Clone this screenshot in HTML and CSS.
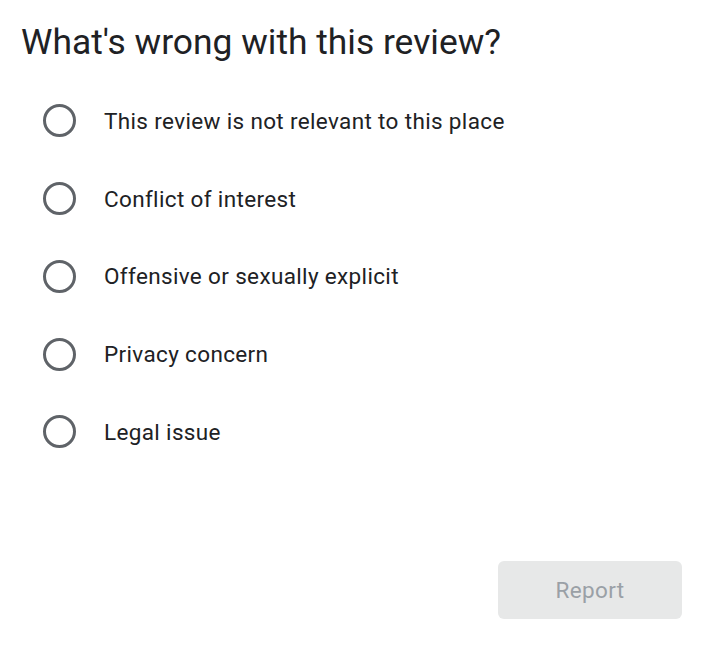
FILE: index.html
```html
<!DOCTYPE html>
<html>
<head>
<meta charset="utf-8">
<link rel="stylesheet" href="styles.css">
</head>
<body>
<div class="dialog">
  <h1 class="title">What's wrong with this review?</h1>
  <div class="options">
    <label class="option"><span class="radio"></span><span class="label">This review is not relevant to this place</span></label>
    <label class="option"><span class="radio"></span><span class="label">Conflict of interest</span></label>
    <label class="option"><span class="radio"></span><span class="label">Offensive or sexually explicit</span></label>
    <label class="option"><span class="radio"></span><span class="label">Privacy concern</span></label>
    <label class="option"><span class="radio"></span><span class="label">Legal issue</span></label>
  </div>
  <div class="actions">
    <button class="report" disabled>Report</button>
  </div>
</div>
</body>
</html>
```

FILE: styles.css
```css
html, body {
  margin: 0;
  padding: 0;
  background: #ffffff;
}
body {
  font-family: Roboto, "Liberation Sans", sans-serif;
  color: #202124;
}
.dialog {
  width: 713px;
  height: 650px;
  box-sizing: border-box;
  padding: 20px 31px 0 21px;
  display: flex;
  flex-direction: column;
}
.title {
  margin: 0;
  font-size: 35.4px;
  font-weight: 400;
  line-height: 44px;
  color: #202124;
}
.options {
  display: flex;
  flex-direction: column;
  margin-top: 18px;
  padding-left: 22px;
}
.option {
  display: flex;
  align-items: center;
  height: 77.75px;
}
.radio {
  width: 27px;
  height: 27px;
  border: 3px solid #5f6368;
  border-radius: 50%;
  flex: none;
}
.label {
  margin-left: 28px;
  font-size: 22.5px;
  letter-spacing: 0.35px;
  color: #202124;
}
.actions {
  display: flex;
  justify-content: flex-end;
  margin-top: 90px;
}
.report {
  width: 184px;
  height: 58px;
  border: none;
  border-radius: 6px;
  background: #e7e8e8;
  color: #9aa0a6;
  font-family: Roboto, "Liberation Sans", sans-serif;
  font-size: 22.5px;
  letter-spacing: 0.35px;
}
```
